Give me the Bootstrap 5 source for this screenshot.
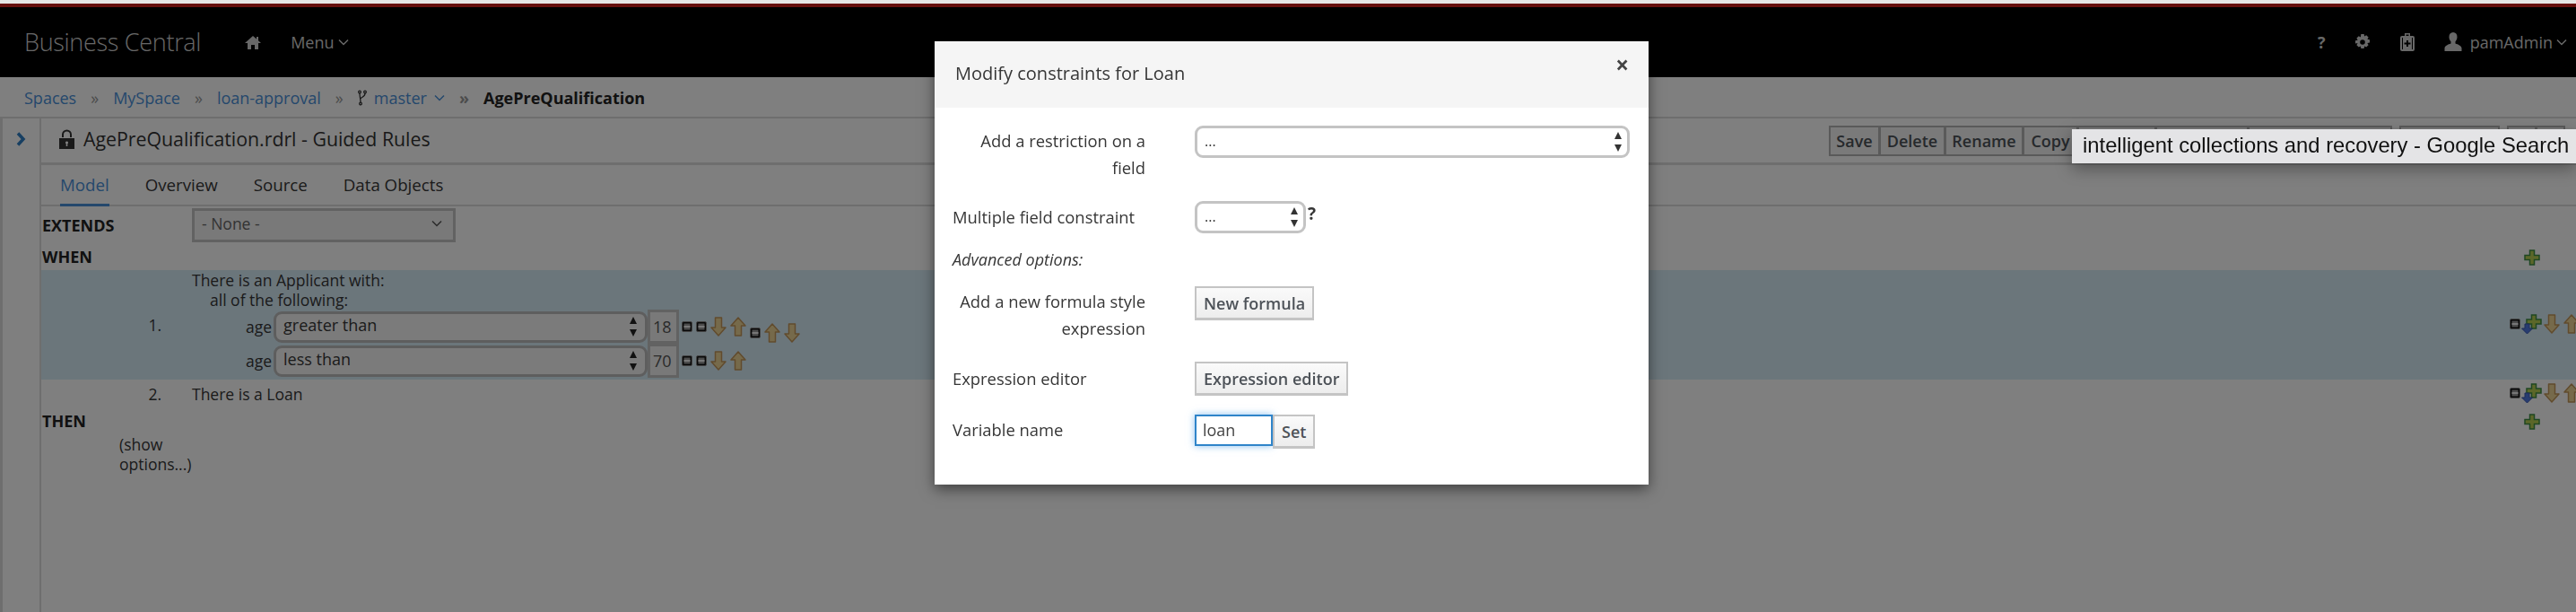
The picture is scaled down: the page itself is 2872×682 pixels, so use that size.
<!DOCTYPE html>
<html lang="en">

<head>
    <meta charset="UTF-8">
    <meta name="viewport" content="width=device-width, initial-scale=1.0">
    <title>Business Central</title>
    <link href="https://cdn.jsdelivr.net/npm/bootstrap@5.3.0/dist/css/bootstrap.min.css" rel="stylesheet">
    <style>
        html, body { height: 682px; overflow: hidden; }
        body { width: 2872px; background: #e6e6e6; font-family: "Open Sans", sans-serif; font-size: 18px; color: #363636; padding-top: 4px; position: relative; }
        .modal-backdrop { top: 4px; width: 2872px; height: 678px; }
        .page-wrap { background: #fff; height: 678px; }

        /* top bar */
        .bc-top { height: 82px; background: #000; border-top: 4px solid #cc1f1a; color: #d1d1d1; padding: 0 10px 0 27px; }
        .bc-brand { font-size: 27px; font-weight: 300; color: #d1d1d1; letter-spacing: -.3px; margin-right: 49px; }
        .bc-home { margin-right: 33px; }
        .bc-menu { font-size: 18px; }
        .bc-chev { width: 12px; height: 8px; }
        .bc-gear { margin: 0 32px 0 32px; }
        .bc-case { margin-right: 32px; }
        .bc-user { margin-right: 9px; }

        /* breadcrumbs */
        .bc-crumbs { height: 46px; padding: 2px 0 0 27px; border-bottom: 2px solid #dcdcdc; }
        .bc-crumbs .breadcrumb { --bs-breadcrumb-margin-bottom: 0; --bs-breadcrumb-divider: "»"; --bs-breadcrumb-item-padding-x: 16px; --bs-breadcrumb-divider-color: #999; font-size: 18px; }
        .bc-crumbs a { color: #4a90d9; text-decoration: none; }
        .bc-crumbs .active { color: #222; font-weight: 700; }

        /* editor */
        .bc-work { height: 550px; }
        .bc-rail { width: 46px; flex: none; border-left: 3px solid #dcdcdc; border-right: 2px solid #dcdcdc; padding: 8px 0 0 15px; }
        .bc-main { min-width: 0; }
        .bc-title { height: 52px; padding: 8px 12px 0 20px; border-bottom: 3px solid #dcdcdc; }
        .bc-title h1 { font-size: 21.3px; font-weight: 400; margin: 0; color: #333; line-height: 30px; gap: 10px; }
        .bc-tools { gap: 8px; }
        .bc-tools .btn { --bs-btn-padding-x: 0; --bs-btn-padding-y: 0; --bs-btn-font-size: 18px; --bs-btn-font-weight: 600; --bs-btn-border-radius: 0; --bs-btn-border-width: 2px; --bs-btn-border-color: #b5b5b5; --bs-btn-bg: #f4f4f4; --bs-btn-color: #4d5258; height: 34px; line-height: 30px; }
        .tool-56 { width: 57px; }
        .tool-74 { width: 74px; }
        .tool-88 { width: 88px; }
        .tool-60 { width: 62px; }
        .tool-160 { width: 161px; }
        .tool-104 { width: 104px; }
        .tool-112 { width: 112px; }
        .tool-33 { width: 33px; }

        .bc-tabs { height: 46px; padding-left: 21px; --bs-nav-tabs-border-width: 0; border-bottom: 2px solid #dcdcdc; gap: 40px; }
        .bc-tabs .nav-link { padding: 0; height: 46px; line-height: 44px; color: #363636; font-size: 18.7px; background: none; border: 0; border-radius: 0; }
        .bc-tabs .nav-link.active { color: #4a90d9; border-bottom: 3px solid #4a90d9; background: none; }

        .bc-rules { font-size: 17.5px; }
        .rule-extends { height: 42px; padding-left: 1px; }
        .rule-key { width: 167px; flex: none; font-weight: 700; font-size: 18px; color: #222; }
        .rule-none { width: 294px; height: 38px; border: 3px solid #c4c4c4; padding: 0 12px 4px 8px; color: #666; background: #f2f2f2; }
        .rule-head { padding: 0 40px 0 1px; height: 29px; font-weight: 700; color: #222; font-size: 18px; }
        .rule-blue { background: #d7ecf7; height: 122px; }
        .rule-plain { height: 32px; }
        .rule-num { width: 168px; flex: none; text-align: right; padding-right: 34px; }
        .rule-lines { line-height: 22px; }
        .rule-sub { padding-left: 20px; }
        .rule-cond { padding-left: 60px; height: 38px; }
        .rule-age { margin-right: 2px; }
        .rule-select { width: 417px; height: 35px; padding: 0 30px 2px 8px; font-size: 18px; line-height: 1.2; border: 3px solid #bdbdbd; border-radius: 9px; color: #363636; background-color: #f7f7f7; background-position: right 6px center; background-size: 14px 26px; background-image: url("data:image/svg+xml,%3Csvg xmlns='http://www.w3.org/2000/svg' viewBox='0 0 14 26'%3E%3Cpath d='M7 2l4 8H3zM7 24l-4-8h8z' fill='%23222'/%3E%3C/svg%3E"); }
        .rule-value { width: 35px; height: 38px; border: 3px solid #c4c4c4; border-radius: 0; background: #f2f2f2; padding: 0 0 0 3px; font-size: 18px; color: #555; margin-right: 2px; }
        .rule-icons { height: 30px; margin-left: -1px; }
        .rule-end { margin: 0 -6px 3px 0; height: 30px; }
        .ic-minus { width: 12px; height: 12px; margin: 0 2px; display: block; }
        .rule-end .ic-minus { margin: 0; }
        .ic-arrow { width: 18px; height: 22px; margin: 0 2px; display: block; }
        .ic-plus { width: 18px; height: 18px; display: block; }
        .ic-drop { width: 24px; height: 24px; display: block; }
        .ic-low { margin-top: 14px; }
        .rule-options { padding-left: 87px; width: 175px; line-height: 22px; }

        /* modal */
        .bc-modal { position: absolute; z-index: 1060; top: 46px; left: 1042px; width: 796px; height: 494px; background: #fff; box-shadow: 0 5px 15px rgba(0, 0, 0, .5); color: #363636; }
        .bc-modal-head { height: 74px; background: #f5f5f5; padding: 0 22px 0 23px; }
        .bc-modal-head h5 { font-size: 20px; font-weight: 400; margin: 0 0 2px; }
        .bc-close { font-size: 26px; font-weight: 700; line-height: 1; color: #444; margin: -22px 0 0 0; }
        .bc-modal-body { padding: 20px 20px 0 20px; }
        .form-lab { width: 270px; flex: none; font-size: 18.4px; line-height: 30px; font-weight: 500; color: #363636; margin: 0; }
        .form-lab.side { text-align: right; padding: 2px 55px 0 0; }
        .form-lab.side-top { padding-top: 2px; }
        .form-sel { height: 36px; border: 3px solid #c4c4c4; border-radius: 9px; padding: 0 24px 2px 8px; font-size: 16px; color: #363636; background-color: #fff; background-position: right 3px center; background-size: 14px 26px; background-image: url("data:image/svg+xml,%3Csvg xmlns='http://www.w3.org/2000/svg' viewBox='0 0 14 26'%3E%3Cpath d='M7 2l4 8H3zM7 24l-4-8h8z' fill='%23333'/%3E%3C/svg%3E"); }
        .form-wide { width: 485px; }
        .form-short { width: 124px; }
        .form-help { font-weight: 700; font-size: 19px; line-height: 22px; margin: -8px 0 0 2px; }
        .form-gap-a { margin-bottom: 22px; }
        .form-gap-b { margin-bottom: 22px; }
        .form-gap-c { margin-bottom: 21px; }
        .form-note { font-size: 18px; font-weight: 400; margin: 14px 0 15px; }
        .bc-btn { --bs-btn-padding-x: 8px; --bs-btn-padding-y: 0; --bs-btn-font-size: 18px; --bs-btn-font-weight: 600; --bs-btn-color: #4d5258; --bs-btn-border-width: 2px; --bs-btn-border-color: #c4c4c4; --bs-btn-border-radius: 0; --bs-btn-hover-color: #4d5258; height: 38px; line-height: 32px; background: linear-gradient(#fafafa, #ededed); border-bottom-width: 3px; }
        .bc-var { width: 87px; height: 35px; border: 2px solid #2f84c9; border-radius: 0; padding: 0 7px 2px; font-size: 18px; color: #444; box-shadow: 0 0 8px rgba(60, 150, 230, .6); }
        .bc-var:focus { border-color: #2f84c9; box-shadow: 0 0 8px rgba(60, 150, 230, .6); }
        .bc-hint { position: absolute; z-index: 1070; top: 144px; left: 2310px; width: 562px; height: 38px; background: #e4e4e6; padding: 0 0 2px 12px; box-shadow: 0 6px 18px rgba(0, 0, 0, .35); font-family: "Liberation Sans", sans-serif; font-size: 23.8px; color: #111; white-space: nowrap; }
    </style>
</head>

<body>
    <svg width="0" height="0" class="position-absolute">
        <symbol id="i-minus" viewBox="0 0 12 12"><rect x=".5" y=".5" width="11" height="11" rx="1.500" fill="#111" stroke="#888"/><rect x="2.500" y="2.500" width="7" height="7" fill="#999"/><rect x="2.500" y="5" width="7" height="2" fill="#eee"/></symbol>
        <symbol id="i-down" viewBox="0 0 18 22"><path d="M5.500 1h7v11H17L9 21 1 12h4.500z" fill="#ecd596" stroke="#c2965a" stroke-width="1.500" stroke-linejoin="round"/></symbol>
        <symbol id="i-up" viewBox="0 0 18 22"><path d="M5.500 21h7V10H17L9 1 1 10h4.500z" fill="#ecd596" stroke="#c2965a" stroke-width="1.500" stroke-linejoin="round"/></symbol>
        <symbol id="i-plus" viewBox="0 0 18 18"><path d="M6.500 1h5v5.500H17v5h-5.500V17h-5v-5.500H1v-5h5.500z" fill="#b8cf52" stroke="#3f8f45" stroke-width="1.500"/></symbol>
        <symbol id="i-drop" viewBox="0 0 24 24"><path d="M9.500 3h5v5H20v5h-5.500v5h-5v-5H4V8h5.500z" transform="translate(3 -1)" fill="#b8cf52" stroke="#3f8f45" stroke-width="1.500"/><path d="M5 12h5v5h3.500l-6 6-6-6H5z" fill="#4f78e0" stroke="#3a58b0"/></symbol>
    </svg>

    <div class="page-wrap">
        <nav class="bc-top d-flex align-items-center">
            <span class="bc-brand">Business Central</span>
            <svg width="18" height="17" viewBox="0 0 18 17" class="bc-home" fill="#d1d1d1"><path d="M9 1 0 9h3v7h4v-5h4v5h4V9h3l-3-2.700V2h-2v2.500z"/></svg>
            <span class="bc-menu d-flex align-items-center gap-1">Menu
                <svg class="bc-chev" viewBox="0 0 12 8" fill="none" stroke="#d1d1d1" stroke-width="1.500"><path d="m1 1.500 5 5 5-5"/></svg>
            </span>
            <div class="ms-auto d-flex align-items-center">
                <span class="fw-bold">?</span>
                <svg width="18" height="18" viewBox="0 0 18 18" class="bc-gear" fill="#d1d1d1"><path fill-rule="evenodd" d="M7.300 0h3.400l.4 2.400 2.100-1.200 2.400 2.400-1.200 2.100 2.600.5v3.400l-2.600.5 1.200 2.100-2.400 2.400-2.100-1.200-.4 2.600H7.300l-.4-2.600-2.100 1.200-2.400-2.400 1.200-2.100L1 10.600V7.200l2.600-.5-1.200-2.100 2.400-2.400 2.100 1.200zM9 6.200a2.800 2.800 0 1 0 0 5.600 2.800 2.800 0 0 0 0-5.600z"/></svg>
                <svg width="18" height="20" viewBox="0 0 18 20" class="bc-case" fill="#d1d1d1"><path fill-rule="evenodd" d="M6 0h6v3h3a2 2 0 0 1 2 2v13a2 2 0 0 1-2 2H3a2 2 0 0 1-2-2V5a2 2 0 0 1 2-2h3zm1.500 1.500V3h3V1.500zM3 5v13h1V5zm11 0v13h1V5zM8 8v2.500H5.500v2H8V15h2v-2.500h2.500v-2H10V8z"/></svg>
                <svg width="20" height="22" viewBox="0 0 20 22" class="bc-user" fill="#d1d1d1"><path d="M10 0c3 0 4.500 2.200 4.500 5.200 0 2-.8 3.800-2 5v2.300c3 1 6.500 2.500 7 5v3.500H.5V17.500c.5-2.500 4-4 7-5v-2.300c-1.200-1.200-2-3-2-5C5.500 2.200 7 0 10 0z"/></svg>
                <span class="d-flex align-items-center gap-1">pamAdmin
                    <svg class="bc-chev" viewBox="0 0 12 8" fill="none" stroke="#d1d1d1" stroke-width="1.500"><path d="m1 1.500 5 5 5-5"/></svg>
                </span>
            </div>
        </nav>

        <div class="bc-crumbs d-flex align-items-center">
            <ol class="breadcrumb">
                <li class="breadcrumb-item"><a href="#">Spaces</a></li>
                <li class="breadcrumb-item"><a href="#">MySpace</a></li>
                <li class="breadcrumb-item"><a href="#">loan-approval</a></li>
                <li class="breadcrumb-item d-flex align-items-center">
                    <svg width="10" height="18" viewBox="0 0 10 18" class="me-2" fill="none" stroke="#333" stroke-width="1.300"><circle cx="2" cy="2.500" r="1.300"/><circle cx="8" cy="2.500" r="1.300"/><circle cx="3" cy="15.500" r="1.300"/><path d="M2 4c0 4 1 6 1 10M8 4c0 4-4 4-5 6"/></svg>
                    <a href="#">master</a>
                    <svg class="bc-chev ms-2" viewBox="0 0 12 8" fill="none" stroke="#4a90d9" stroke-width="1.500"><path d="m1 1.500 5 5 5-5"/></svg>
                </li>
                <li class="breadcrumb-item active">AgePreQualification</li>
            </ol>
        </div>

        <div class="bc-work d-flex">
            <div class="bc-rail">
                <svg width="12" height="16" viewBox="0 0 12 16" fill="none" stroke="#2f7fc4" stroke-width="3.500"><path d="m2 1.500 6 6.500-6 6.500"/></svg>
            </div>
            <div class="bc-main flex-grow-1">
                <div class="bc-title d-flex">
                    <h1 class="d-flex align-items-center align-self-start">
                        <svg width="17" height="22" viewBox="0 0 17 22" fill="#333"><path fill-rule="evenodd" d="M3 9V6a5.500 5.500 0 0 1 11 0v3h-2V6a3.500 3.500 0 0 0-7 0v3zM0 10h17v12H0zm8.500 3.500a1.500 1.500 0 0 0-.8 2.800V19h1.600v-2.700a1.500 1.500 0 0 0-.8-2.800z"/></svg>
                        AgePreQualification.rdrl - Guided Rules
                    </h1>
                    <div class="bc-tools ms-auto d-flex">
                        <div class="btn-group">
                            <button class="btn tool-56">Save</button>
                            <button class="btn tool-74">Delete</button>
                            <button class="btn tool-88">Rename</button>
                            <button class="btn tool-60">Copy</button>
                            <button class="btn tool-88" aria-hidden="true"></button>
                            <button class="btn tool-104" aria-hidden="true"></button>
                            <button class="btn tool-160" aria-hidden="true"></button>
                        </div>
                        <button class="btn tool-112" aria-hidden="true"></button>
                        <div class="btn-group">
                            <button class="btn tool-33" aria-hidden="true"></button>
                            <button class="btn tool-33" aria-hidden="true"></button>
                        </div>
                    </div>
                </div>
                <ul class="nav nav-tabs bc-tabs">
                    <li class="nav-item"><a class="nav-link active" href="#">Model</a></li>
                    <li class="nav-item"><a class="nav-link" href="#">Overview</a></li>
                    <li class="nav-item"><a class="nav-link" href="#">Source</a></li>
                    <li class="nav-item"><a class="nav-link" href="#">Data Objects</a></li>
                </ul>

                <div class="bc-rules">
                    <div class="rule-extends d-flex align-items-center">
                        <span class="rule-key">EXTENDS</span>
                        <div class="rule-none d-flex align-items-center justify-content-between">
                            <span>- None -</span>
                            <svg class="bc-chev" viewBox="0 0 12 8" fill="none" stroke="#555" stroke-width="1.500"><path d="m1 1.500 5 5 5-5"/></svg>
                        </div>
                    </div>
                    <div class="rule-head d-flex align-items-center justify-content-between">
                        <span>WHEN</span>
                        <svg class="ic-plus"><use href="#i-plus"/></svg>
                    </div>
                    <div class="rule-blue d-flex align-items-center">
                        <span class="rule-num">1.</span>
                        <div class="rule-lines align-self-start">
                            <div>There is an Applicant with:</div>
                            <div class="rule-sub">all of the following:</div>
                            <div class="rule-cond d-flex align-items-center">
                                <span class="rule-age">age</span>
                                <select class="form-select rule-select"><option>greater than</option></select>
                                <input class="form-control rule-value" value="18">
                                <div class="rule-icons d-flex align-items-center">
                                    <svg class="ic-minus"><use href="#i-minus"/></svg>
                                    <svg class="ic-minus"><use href="#i-minus"/></svg>
                                    <svg class="ic-arrow"><use href="#i-down"/></svg>
                                    <svg class="ic-arrow"><use href="#i-up"/></svg>
                                    <svg class="ic-minus ic-low"><use href="#i-minus"/></svg>
                                    <svg class="ic-arrow ic-low"><use href="#i-up"/></svg>
                                    <svg class="ic-arrow ic-low"><use href="#i-down"/></svg>
                                </div>
                            </div>
                            <div class="rule-cond d-flex align-items-center">
                                <span class="rule-age">age</span>
                                <select class="form-select rule-select"><option>less than</option></select>
                                <input class="form-control rule-value" value="70">
                                <div class="rule-icons d-flex align-items-center">
                                    <svg class="ic-minus"><use href="#i-minus"/></svg>
                                    <svg class="ic-minus"><use href="#i-minus"/></svg>
                                    <svg class="ic-arrow"><use href="#i-down"/></svg>
                                    <svg class="ic-arrow"><use href="#i-up"/></svg>
                                </div>
                            </div>
                        </div>
                        <div class="rule-end ms-auto d-flex align-items-center">
                            <svg class="ic-minus"><use href="#i-minus"/></svg>
                            <svg class="ic-drop"><use href="#i-drop"/></svg>
                            <svg class="ic-arrow"><use href="#i-down"/></svg>
                            <svg class="ic-arrow"><use href="#i-up"/></svg>
                        </div>
                    </div>
                    <div class="rule-plain d-flex align-items-center">
                        <span class="rule-num">2.</span>
                        <span>There is a Loan</span>
                        <div class="rule-end ms-auto d-flex align-items-center">
                            <svg class="ic-minus"><use href="#i-minus"/></svg>
                            <svg class="ic-drop"><use href="#i-drop"/></svg>
                            <svg class="ic-arrow"><use href="#i-down"/></svg>
                            <svg class="ic-arrow"><use href="#i-up"/></svg>
                        </div>
                    </div>
                    <div class="rule-head d-flex align-items-center justify-content-between">
                        <span>THEN</span>
                        <svg class="ic-plus"><use href="#i-plus"/></svg>
                    </div>
                    <div class="rule-options">(show options...)</div>
                </div>
            </div>
        </div>
    </div>

    <div class="modal-backdrop fade show"></div>

    <div class="bc-modal">
        <div class="bc-modal-head d-flex align-items-center justify-content-between">
            <h5>Modify constraints for Loan</h5>
            <span class="bc-close">×</span>
        </div>
        <div class="bc-modal-body">
            <div class="d-flex form-gap-a">
                <label class="form-lab side">Add a restriction on a field</label>
                <select class="form-select form-sel form-wide"><option>...</option></select>
            </div>
            <div class="d-flex align-items-center">
                <label class="form-lab">Multiple field constraint</label>
                <select class="form-select form-sel form-short"><option>...</option></select>
                <span class="form-help">?</span>
            </div>
            <div class="form-lab form-note fst-italic">Advanced options:</div>
            <div class="d-flex form-gap-b">
                <label class="form-lab side">Add a new formula style expression</label>
                <button class="btn bc-btn">New formula</button>
            </div>
            <div class="d-flex align-items-center form-gap-c">
                <label class="form-lab">Expression editor</label>
                <button class="btn bc-btn">Expression editor</button>
            </div>
            <div class="d-flex align-items-start">
                <label class="form-lab side-top">Variable name</label>
                <input class="form-control bc-var" value="loan">
                <button class="btn bc-btn">Set</button>
            </div>
        </div>
    </div>

    <div class="bc-hint d-flex align-items-center">intelligent collections and recovery - Google Search</div>

    <script src="https://cdn.jsdelivr.net/npm/bootstrap@5.3.0/dist/js/bootstrap.bundle.min.js"></script>
</body>

</html>
